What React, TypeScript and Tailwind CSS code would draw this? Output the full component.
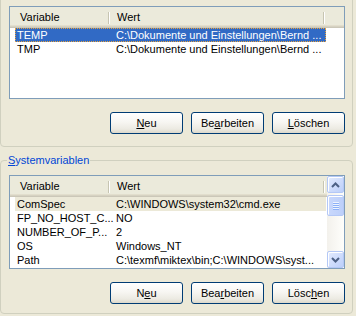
import type { ReactNode } from "react";

type Row = { name: string; value: string };

const userVars: Row[] = [
  { name: "TEMP", value: "C:\\Dokumente und Einstellungen\\Bernd ..." },
  { name: "TMP", value: "C:\\Dokumente und Einstellungen\\Bernd ..." },
];

const systemVars: Row[] = [
  { name: "ComSpec", value: "C:\\WINDOWS\\system32\\cmd.exe" },
  { name: "FP_NO_HOST_C...", value: "NO" },
  { name: "NUMBER_OF_P...", value: "2" },
  { name: "OS", value: "Windows_NT" },
  { name: "Path", value: "C:\\texmf\\miktex\\bin;C:\\WINDOWS\\syst..." },
];

function Divider() {
  return <div className="mt-[5px] h-[12px] w-[2px] border-l border-[#C7C5B2] bg-white" />;
}

function ListHeader() {
  return (
    <div className="flex h-[21px] shrink-0 bg-[linear-gradient(to_bottom,#EBEADB_0px,#EBEADB_18px,#E2DECD_18px,#E2DECD_19px,#D6D2C2_19px,#D6D2C2_20px,#CBC7B8_20px)]">
      <div className="w-[98px] pl-[10px] pt-[3px] leading-[14px]">Variable</div>
      <Divider />
      <div className="w-[213px] pl-[7px] pt-[3px] leading-[14px]">Wert</div>
      <Divider />
    </div>
  );
}

function ListRow({ row, state }: { row: Row; state?: "focused" | "inactive" }) {
  const look =
    state === "focused"
      ? "bg-[#316AC5] text-white outline-1 outline-dotted outline-[#E8A33D] -outline-offset-1"
      : state === "inactive"
        ? "bg-[#ECE9D8]"
        : "";
  return (
    <div className={`ml-[5px] flex h-[14px] w-[311px] whitespace-nowrap leading-[14px] ${look}`}>
      <div className="w-[99px] overflow-hidden pl-[2px]">{row.name}</div>
      <div className="flex-1 overflow-hidden pl-[2px]">{row.value}</div>
    </div>
  );
}

function Arrow({ down }: { down?: boolean }) {
  return (
    <svg width="9" height="6" viewBox="0 0 9 6" className={down ? "rotate-180" : ""}>
      <path d="M1 5 L4.5 1.5 L8 5" fill="none" stroke="#4D6185" strokeWidth="2" />
    </svg>
  );
}

function ScrollButton({ down }: { down?: boolean }) {
  return (
    <div className="flex h-[17px] w-[17px] items-center justify-center rounded-[2px] border border-[#B4C8F6] bg-[linear-gradient(to_bottom_right,#E3EBFE,#BCCFFA)] shadow-[inset_1px_1px_0_#FFFFFF]">
      <Arrow down={down} />
    </div>
  );
}

function ScrollBar() {
  return (
    <div className="flex w-[17px] flex-col bg-[linear-gradient(to_right,#F3F1EC,#FEFEFB)]">
      <ScrollButton />
      <div className="mt-[2px] flex h-[21px] w-[17px] flex-col items-center justify-center gap-[1px] rounded-[2px] border border-[#B4C8F6] bg-[linear-gradient(to_right,#C9D8FC,#BCCFFA)] shadow-[inset_1px_1px_0_#FFFFFF]">
        <div className="h-[1px] w-[6px] bg-[#EEF4FE] shadow-[0_1px_0_#8CB0F8]" />
        <div className="h-[1px] w-[6px] bg-[#EEF4FE] shadow-[0_1px_0_#8CB0F8]" />
        <div className="h-[1px] w-[6px] bg-[#EEF4FE] shadow-[0_1px_0_#8CB0F8]" />
        <div className="h-[1px] w-[6px] bg-[#EEF4FE] shadow-[0_1px_0_#8CB0F8]" />
      </div>
      <div className="flex-1" />
      <ScrollButton down />
    </div>
  );
}

function XpButton({ children }: { children: ReactNode }) {
  return (
    <button className="h-[22px] w-[73px] rounded-[3px] border border-[#003C74] bg-[linear-gradient(to_bottom,#FFFFFF_0%,#F7F6F2_45%,#ECEAE2_80%,#DCD8CB_100%)] text-[11px] leading-none text-black">
      {children}
    </button>
  );
}

function ButtonRow({ keys }: { keys: [ReactNode, ReactNode, ReactNode] }) {
  return (
    <div className="flex w-[336px] justify-end gap-[8px]">
      <XpButton>{keys[0]}</XpButton>
      <XpButton>{keys[1]}</XpButton>
      <XpButton>{keys[2]}</XpButton>
    </div>
  );
}

export default function App() {
  return (
    <div className="h-[316px] w-[356px] overflow-hidden bg-[#ECE9D8] font-['Liberation_Sans',Arial,sans-serif] text-[11px] text-black">
      {/* Benutzervariablen (top of group is scrolled off) */}
      <div className="-mt-[12px] h-[159px] w-[353px] rounded-[4px] border border-[#D0D0BF] pl-[8px] pt-[17px]">
        <div className="h-[93px] w-[336px] overflow-hidden border border-[#7F9DB9] bg-white">
          <ListHeader />
          <ListRow row={userVars[0]} state="focused" />
          <ListRow row={userVars[1]} />
        </div>
        <div className="mt-[13px]">
          <ButtonRow
            keys={[
              <><span className="underline">N</span>eu</>,
              <>Be<span className="underline">a</span>rbeiten</>,
              <><span className="underline">L</span>öschen</>,
            ]}
          />
        </div>
      </div>

      <fieldset className="mt-[7px] h-[160px] w-[353px] rounded-[4px] border border-[#D0D0BF] pl-[8px] pt-[8px]">
        <legend className="-ml-[2px] px-[1px] leading-[13px] text-[#0046D5]">
          <span className="underline">S</span>ystemvariablen
        </legend>
        <div className="flex h-[94px] w-[336px] overflow-hidden border border-[#7F9DB9] bg-white">
          <div className="flex w-[317px] flex-col">
            <ListHeader />
            <ListRow row={systemVars[0]} state="inactive" />
            {systemVars.slice(1).map((r) => (
              <ListRow key={r.name} row={r} />
            ))}
          </div>
          <ScrollBar />
        </div>
        <div className="mt-[13px]">
          <ButtonRow
            keys={[
              <>N<span className="underline">e</span>u</>,
              <>Bea<span className="underline">r</span>beiten</>,
              <>Lösc<span className="underline">h</span>en</>,
            ]}
          />
        </div>
      </fieldset>
    </div>
  );
}
